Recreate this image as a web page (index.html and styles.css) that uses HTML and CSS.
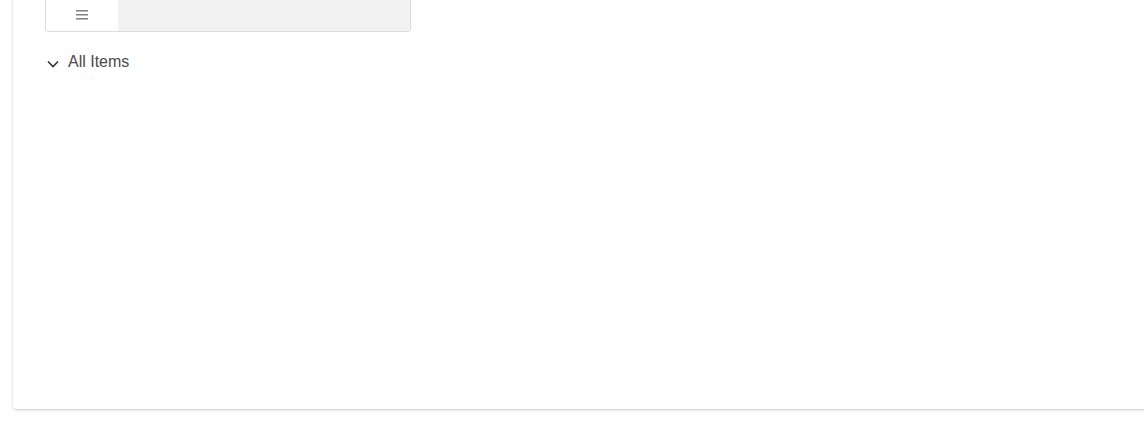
FILE: index.html
```html
<!DOCTYPE html>
<html lang="en">
<head>
    <meta charset="UTF-8">
    <title>All Items</title>
    <link rel="stylesheet" href="styles.css">
</head>
<body>
    <div class="card">
        <div class="toolbar">
            <button class="view-btn" type="button">
                <svg width="12" height="10" viewBox="0 0 12 10">
                    <rect x="0" y="0" width="12" height="1.5" fill="#808080"/>
                    <rect x="0" y="4" width="12" height="1.5" fill="#808080"/>
                    <rect x="0" y="8" width="12" height="1.5" fill="#808080"/>
                </svg>
            </button>
            <div class="toolbar-rest"></div>
        </div>

        <div class="tree-row">
            <svg class="chevron" width="12" height="8" viewBox="0 0 12 8">
                <path d="M1 1.5 L6 6.5 L11 1.5" fill="none" stroke="#333" stroke-width="1.6"/>
            </svg>
            <span>All Items</span>
        </div>
    </div>
</body>
</html>
```

FILE: styles.css
```css
html {
    overflow: hidden;
}
body {
    margin: 0;
    min-height: 100vh;
    background: #fff;
    font-family: "Liberation Sans", Arial, sans-serif;
}
.card {
    margin: -39px -40px 0 13px;
    height: 448px;
    box-sizing: border-box;
    padding: 30px 32px;
    background: #fff;
    border-radius: 4px;
    box-shadow: 0 1px 3px rgba(0,0,0,0.22);
}
.toolbar {
    display: flex;
    width: 366px;
    height: 41px;
    box-sizing: border-box;
    border: 1px solid #dcdcdc;
    border-radius: 3px;
    overflow: hidden;
}
.view-btn {
    width: 72px;
    border: none;
    background: #fff;
    display: flex;
    align-items: flex-end;
    justify-content: center;
    padding: 0 0 11px 0;
    cursor: pointer;
}
.toolbar-rest {
    flex: 1;
    background: #f2f2f2;
}
.tree-row {
    display: flex;
    align-items: center;
    margin-top: 21px;
    height: 18px;
    color: #4a4a4a;
    font-size: 16px;
}
.chevron {
    margin: 3px 9px 0 2px;
}
```
